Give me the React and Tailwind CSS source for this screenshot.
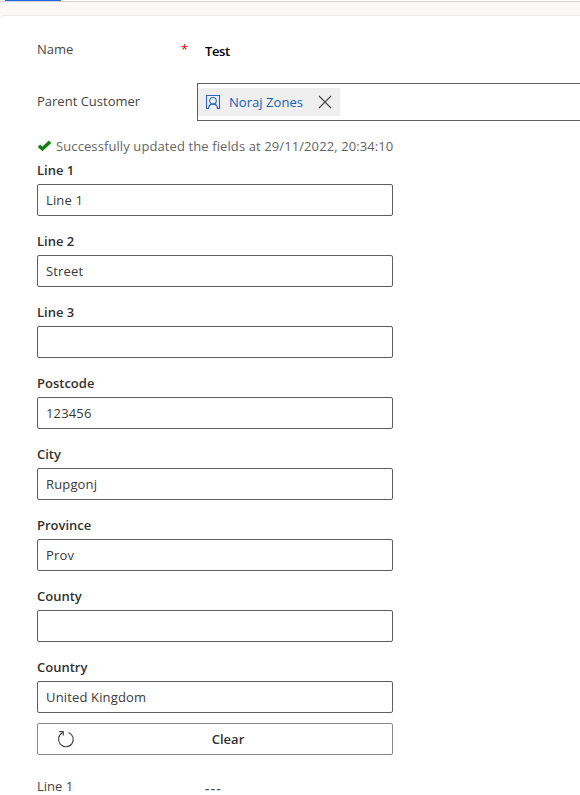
const fields = [
  { label: "Line 1", value: "Line 1" },
  { label: "Line 2", value: "Street" },
  { label: "Line 3", value: "" },
  { label: "Postcode", value: "123456" },
  { label: "City", value: "Rupgonj" },
  { label: "Province", value: "Prov" },
  { label: "County", value: "" },
  { label: "Country", value: "United Kingdom" },
];

function ContactIcon() {
  return (
    <svg className="h-4 w-4 shrink-0" viewBox="0 0 16 16" fill="none" stroke="#2f66c0" strokeWidth="1.1">
      <path d="M3.5 14.5h-2v-13h13v13h-2" />
      <circle cx="8" cy="6.8" r="3.3" />
      <path d="M3.5 15c0-3 2-4.9 4.5-4.9s4.5 1.9 4.5 4.9" />
    </svg>
  );
}

function Field({ label, value }) {
  return (
    <div className="mb-[11px]">
      <div className="flex h-7 items-center pt-0.5 text-[13px] font-semibold text-[#323130]">{label}</div>
      <div className="flex h-8 items-center rounded-[2px] border border-[#605e5c] bg-white px-2 pt-0.5 text-[13px] tracking-[0.15px] text-[#3b3a39]">
        {value}
      </div>
    </div>
  );
}

export default function App() {
  return (
    <div className="flex h-[795px] w-[580px] flex-col overflow-hidden bg-[#faf9f8] font-['Open_Sans','Noto_Sans',sans-serif] text-[13px] text-[#484644]">
      <div className="h-[2px] shrink-0 border-b border-[#d2d2d0] bg-white pl-[5px]">
        <div className="h-px w-14 bg-[#2266e3]" />
      </div>
      <div className="mt-[13px] flex grow flex-col rounded-tl-[4px] border-t border-[#efeeed] bg-white pl-[37px]">
        <div className="mt-[18px] flex h-8 shrink-0 items-center">
          <div className="w-[144px]">Name</div>
          <div className="w-6 text-[#e00000]">*</div>
          <div className="mt-1 font-semibold tracking-[-0.4px] text-black">Test</div>
        </div>
        <div className="mt-[17px] flex h-[38px] shrink-0">
          <div className="flex w-40 items-center">Parent Customer</div>
          <div className="flex grow items-center border border-r-0 border-[#605e5c]">
            <div className="flex h-7 w-[142px] items-center bg-[#efefef] pl-[7px]">
              <ContactIcon />
              <span className="ml-2 w-[89px] pt-0.5 tracking-[0.05px] text-[#1160b7]">Noraj Zones</span>
              <svg className="h-3.5 w-3.5" viewBox="0 0 14 14" stroke="#444" strokeWidth="1.1">
                <path d="M1 1l12 12M13 1L1 13" />
              </svg>
            </div>
          </div>
        </div>
        <div className="w-[356px]">
          <div className="mt-4 flex h-[19px] items-center whitespace-nowrap tracking-[0.1px] text-[#666462]">
            <svg className="mr-[5px] -mt-0.5 h-3.5 w-3.5 shrink-0" viewBox="0 0 14 14" fill="none" stroke="#0b800b" strokeWidth="3.3">
              <path d="M2 6.8l3.4 3.2L13 2.8" />
            </svg>
            Successfully updated the fields at 29/11/2022, 20:34:10
          </div>
          {fields.map((field) => (
            <Field key={field.label} {...field} />
          ))}
          <button className="-mt-px grid h-8 w-full grid-cols-[1fr_auto_1fr] items-center rounded-[2px] border border-[#8a8886] text-[13px] font-semibold text-[#323130]">
            <svg className="ml-[19px] h-[18px] w-[18px]" viewBox="0 0 18 18" fill="none" stroke="#444" strokeWidth="1.1">
              <path d="M11.5 2.4A7.4 7.4 0 1 1 5.6 2.7M2.3 1.6h4v4" />
            </svg>
            <span className="pl-[26px] pt-0.5">Clear</span>
          </button>
        </div>
        <div className="mt-[22px] flex h-5 shrink-0 items-center">
          <div className="w-[168px]">Line 1</div>
          <div className="mt-1 font-semibold tracking-[1.6px]">---</div>
        </div>
      </div>
    </div>
  );
}
